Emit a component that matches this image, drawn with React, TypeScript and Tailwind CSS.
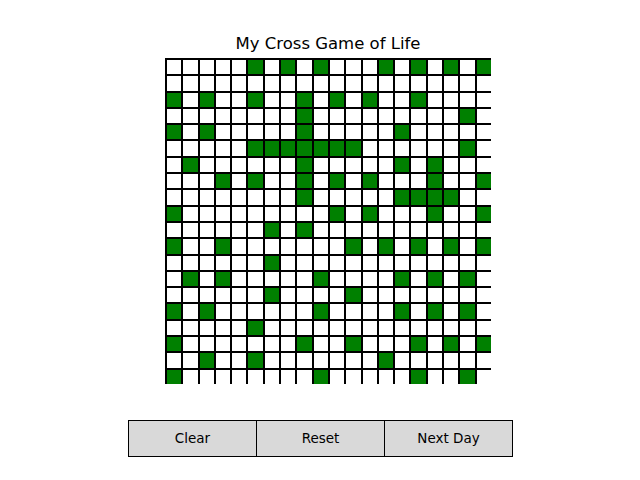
import React from 'react';

const live: number[][] = [
  [5, 7, 9, 13, 15, 17, 19],
  [],
  [0, 2, 5, 8, 10, 12, 15],
  [8, 18],
  [0, 2, 8, 14],
  [5, 6, 7, 8, 9, 10, 11, 18],
  [1, 8, 14, 16],
  [3, 5, 8, 10, 12, 16, 19],
  [8, 14, 15, 16, 17],
  [0, 10, 12, 16, 19],
  [6, 8],
  [0, 3, 11, 13, 15, 17, 19],
  [6],
  [1, 3, 9, 14, 16, 18],
  [6, 11],
  [0, 2, 9, 14, 16, 18],
  [5],
  [0, 8, 11, 15, 17, 19],
  [2, 5, 13],
  [0, 9, 15, 18],
];

function Board() {
  return (
    <div className="grid w-[326px] grid-cols-20">
      {live.map((row, r) =>
        Array.from({ length: 20 }, (_, c) => (
          <div
            key={`${r}-${c}`}
            className={
              'h-[16.3px] border-l-2 border-t-2 border-black ' +
              (row.includes(c) ? 'bg-[#008000]' : 'bg-white')
            }
          />
        ))
      )}
    </div>
  );
}

export default function App() {
  const buttons = ['Clear', 'Reset', 'Next Day'];
  return (
    <div
      className="h-[480px] w-[640px] bg-white pt-[34px] text-black"
      style={{ fontFamily: '"DejaVu Sans", sans-serif' }}
    >
      <div className="ml-[165px] w-[326px] text-center text-[16.5px] leading-[20px]">My Cross Game of Life</div>
      <div className="ml-[165px] mt-[4px]">
        <Board />
      </div>
      <div className="ml-[128px] mt-[36px] flex h-[37px] w-[385px] border border-black bg-[#d9d9d9]">
        {buttons.map((b, i) => (
          <div
            key={b}
            className={
              'flex flex-1 items-center justify-center text-[13.5px] ' + (i > 0 ? 'border-l border-black' : '')
            }
          >
            {b}
          </div>
        ))}
      </div>
    </div>
  );
}
